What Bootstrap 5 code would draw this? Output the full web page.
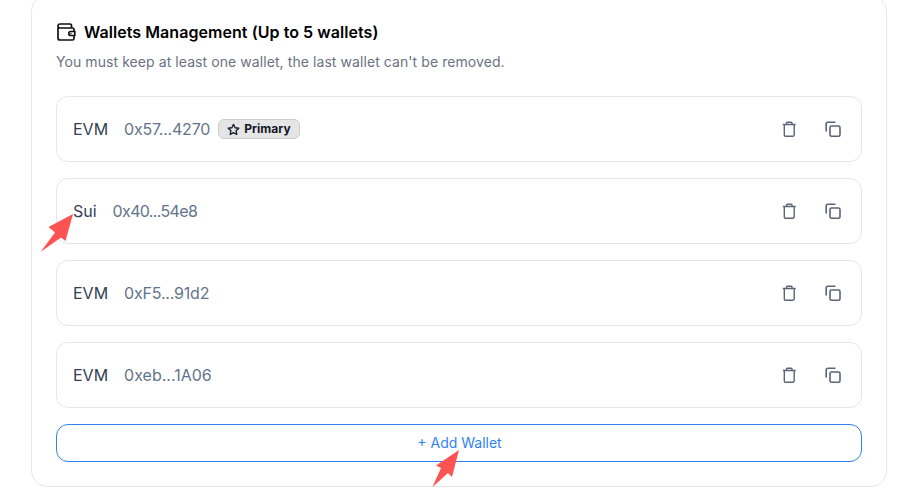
<!DOCTYPE html>
<html lang="en">
<head>
    <title>Wallets Management</title>
    <link rel="stylesheet" href="https://cdn.jsdelivr.net/npm/bootstrap@5.3.0/dist/css/bootstrap.min.css">
    <style>
        body { font-family: Inter, "Liberation Sans", sans-serif; background: #fff; overflow: hidden; height: 500px; position: relative; }
        .wallet-panel { margin: -5px 15px 0 31px; height: 492px; border: 1px solid #e5e7eb; border-radius: 16px; padding: 24px; }
        .panel-title { font-size: 16px; font-weight: 600; line-height: 24px; letter-spacing: .06px; color: #000; gap: 8px; }
        .panel-sub { font-size: 14px; line-height: 20px; letter-spacing: .075px; color: #6b7280; margin: 8px 0 24px; }
        .wallet-row { height: 66px; border: 1px solid #e5e7eb; border-radius: 12px; padding: 0 16px; margin-bottom: 16px; }
        .wallet-chain { font-size: 16px; color: #334155; margin-right: 16px; }
        .wallet-addr { font-size: 16px; color: #64748b; margin-right: 8px; }
        .addr-first { letter-spacing: -.22px; }
        .addr-sui { letter-spacing: -.65px; }
        .addr-third { letter-spacing: -.2px; }
        .primary-tag { height: 20px; font-size: 12px; font-weight: 700; letter-spacing: .05px; color: #111827; background: #e5e5e5; border: 1px solid #cccccc; border-radius: 6px; padding: 0 8px; gap: 4px; }
        .row-actions { gap: 28px; margin-right: 4px; color: #5b6577; }
        .row-actions svg { display: block; }
        .add-wallet { height: 38px; font-size: 14px; color: #3182f6; border: 1px solid #3182f6; border-radius: 12px; padding: 0 0 1px 1px; }
        .arrow-layer { position: absolute; left: 0; top: 0; pointer-events: none; }
    </style>
</head>
<body>
    <div class="wallet-panel">
        <div class="panel-title d-flex align-items-center">
            <svg width="20" height="20" viewBox="0 0 20 20" fill="none" stroke="#111" stroke-width="1.700" stroke-linejoin="round"><path d="M2 5.500v10.500a2 2 0 0 0 2 2h12.500a1.500 1.500 0 0 0 1.500-1.500V7.500A1.500 1.500 0 0 0 16.500 6H4a2 2 0 0 1-2-2.300A2 2 0 0 1 4 2h10a1.500 1.500 0 0 1 1.500 1.500V6"/><path d="M18.800 9.500h-4a2 2 0 0 0 0 4h4Z" fill="#fff"/><circle cx="15" cy="11.500" r=".7" fill="#111" stroke="none"/></svg>
            <span>Wallets Management (Up to 5 wallets)</span>
        </div>
        <p class="panel-sub">You must keep at least one wallet, the last wallet can't be removed.</p>

        <div class="wallet-row d-flex align-items-center">
            <span class="wallet-chain">EVM</span><span class="wallet-addr addr-first">0x57...4270</span>
            <span class="primary-tag d-inline-flex align-items-center">
                <svg width="13" height="13" viewBox="0 0 24 24" fill="none" stroke="#111827" stroke-width="2.400" stroke-linejoin="round"><path d="m12 2.500 3 6.300 6.800.9-5 4.700 1.300 6.800-6.100-3.300-6.100 3.300 1.300-6.800-5-4.700 6.800-.9Z"/></svg>
                Primary
            </span>
            <div class="row-actions d-flex ms-auto">
                <svg width="16" height="16" viewBox="0 0 16 16" fill="none" stroke="currentColor" stroke-width="1.400" stroke-linejoin="round"><path d="M1.800 3.500h12.900M5.500 3.500V2a.8.8 0 0 1 .8-.8h3.900a.8.8 0 0 1 .8.8v1.500M3.300 3.500V14a1.200 1.200 0 0 0 1.200 1.200h7.500a1.200 1.200 0 0 0 1.200-1.200V3.500"/></svg>
                <svg width="16" height="16" viewBox="0 0 16 16" fill="none" stroke="currentColor" stroke-width="1.600"><rect x="5" y="5" width="10" height="10.200" rx="1.500"/><path d="M1.200 10.500V3a1.800 1.800 0 0 1 1.800-1.800h7.500"/></svg>
            </div>
        </div>

        <div class="wallet-row d-flex align-items-center">
            <span class="wallet-chain">Sui</span><span class="wallet-addr addr-sui">0x40...54e8</span>
            <div class="row-actions d-flex ms-auto">
                <svg width="16" height="16" viewBox="0 0 16 16" fill="none" stroke="currentColor" stroke-width="1.400" stroke-linejoin="round"><path d="M1.800 3.500h12.900M5.500 3.500V2a.8.8 0 0 1 .8-.8h3.900a.8.8 0 0 1 .8.8v1.500M3.300 3.500V14a1.200 1.200 0 0 0 1.200 1.200h7.500a1.200 1.200 0 0 0 1.200-1.200V3.500"/></svg>
                <svg width="16" height="16" viewBox="0 0 16 16" fill="none" stroke="currentColor" stroke-width="1.600"><rect x="5" y="5" width="10" height="10.200" rx="1.500"/><path d="M1.200 10.500V3a1.800 1.800 0 0 1 1.800-1.800h7.500"/></svg>
            </div>
        </div>

        <div class="wallet-row d-flex align-items-center">
            <span class="wallet-chain">EVM</span><span class="wallet-addr addr-third">0xF5...91d2</span>
            <div class="row-actions d-flex ms-auto">
                <svg width="16" height="16" viewBox="0 0 16 16" fill="none" stroke="currentColor" stroke-width="1.400" stroke-linejoin="round"><path d="M1.800 3.500h12.900M5.500 3.500V2a.8.8 0 0 1 .8-.8h3.900a.8.8 0 0 1 .8.8v1.500M3.300 3.500V14a1.200 1.200 0 0 0 1.200 1.200h7.500a1.200 1.200 0 0 0 1.200-1.200V3.500"/></svg>
                <svg width="16" height="16" viewBox="0 0 16 16" fill="none" stroke="currentColor" stroke-width="1.600"><rect x="5" y="5" width="10" height="10.200" rx="1.500"/><path d="M1.200 10.500V3a1.800 1.800 0 0 1 1.800-1.800h7.500"/></svg>
            </div>
        </div>

        <div class="wallet-row d-flex align-items-center">
            <span class="wallet-chain">EVM</span><span class="wallet-addr">0xeb...1A06</span>
            <div class="row-actions d-flex ms-auto">
                <svg width="16" height="16" viewBox="0 0 16 16" fill="none" stroke="currentColor" stroke-width="1.400" stroke-linejoin="round"><path d="M1.800 3.500h12.900M5.500 3.500V2a.8.8 0 0 1 .8-.8h3.900a.8.8 0 0 1 .8.8v1.500M3.300 3.500V14a1.200 1.200 0 0 0 1.200 1.200h7.500a1.200 1.200 0 0 0 1.200-1.200V3.500"/></svg>
                <svg width="16" height="16" viewBox="0 0 16 16" fill="none" stroke="currentColor" stroke-width="1.600"><rect x="5" y="5" width="10" height="10.200" rx="1.500"/><path d="M1.200 10.500V3a1.800 1.800 0 0 1 1.800-1.800h7.500"/></svg>
            </div>
        </div>

        <button class="add-wallet btn w-100 d-flex align-items-center justify-content-center" type="button">+ Add Wallet</button>
    </div>

    <svg class="arrow-layer" width="902" height="500" viewBox="0 0 902 500">
        <polygon fill="#ff5252" points="73,214 48.500,227 55,232.500 40.500,252 61,237.500 65.500,241"/>
        <polygon fill="#ff5252" points="459,450 436,465.500 441,468 432.500,487 448,473 452,477"/>
    </svg>
</body>
</html>
